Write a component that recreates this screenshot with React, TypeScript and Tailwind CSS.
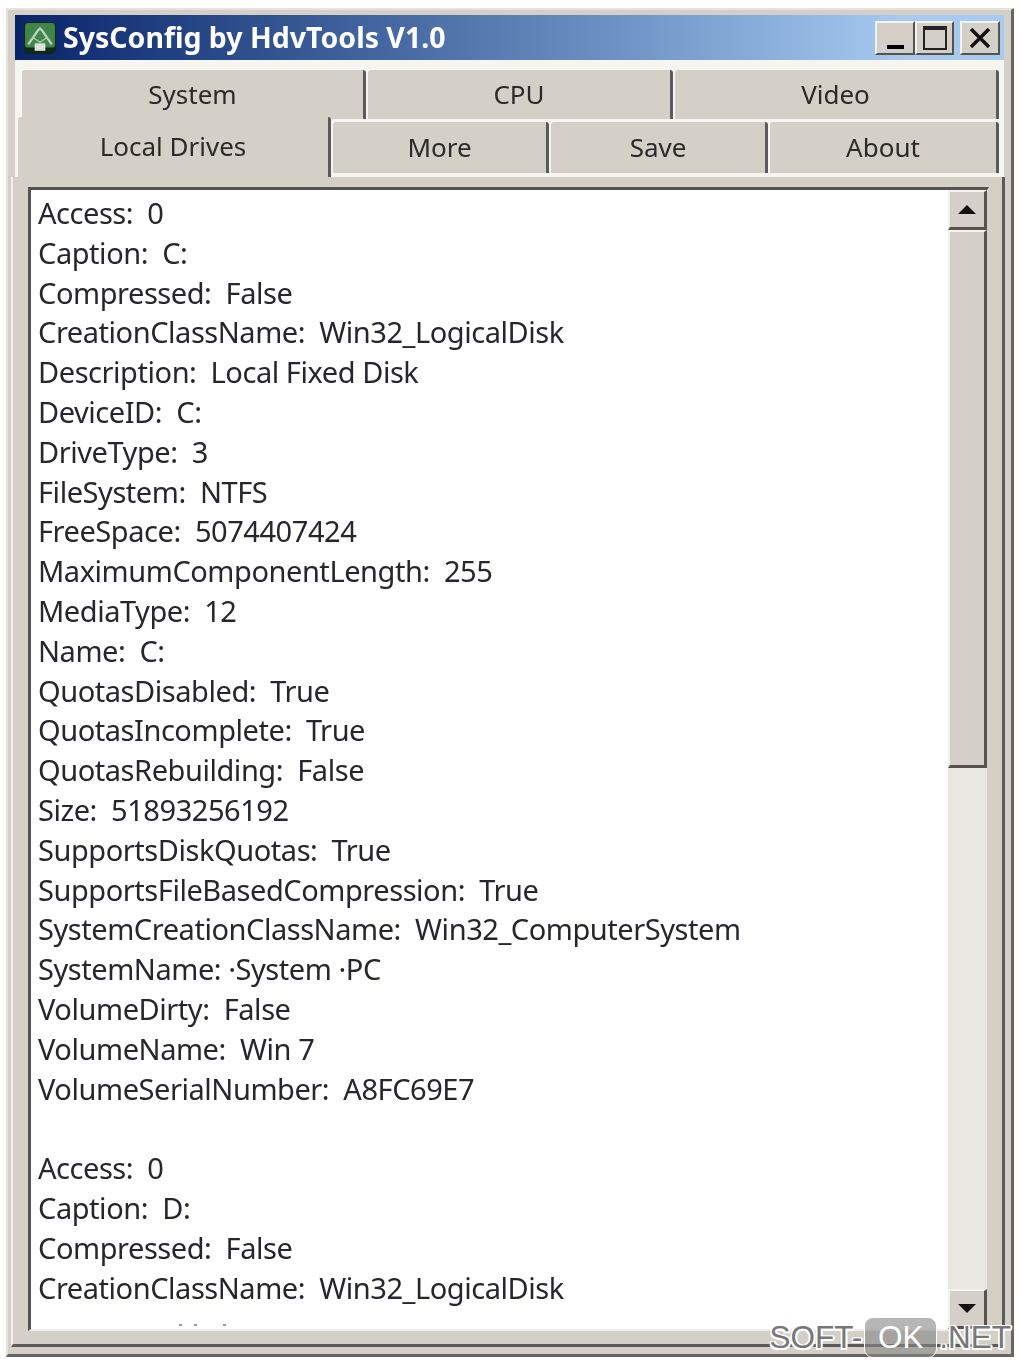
// App.tsx — SysConfig window, Local Drives tab.

const LINES = [
  'Access:  0',
  'Caption:  C:',
  'Compressed:  False',
  'CreationClassName:  Win32_LogicalDisk',
  'Description:  Local Fixed Disk',
  'DeviceID:  C:',
  'DriveType:  3',
  'FileSystem:  NTFS',
  'FreeSpace:  5074407424',
  'MaximumComponentLength:  255',
  'MediaType:  12',
  'Name:  C:',
  'QuotasDisabled:  True',
  'QuotasIncomplete:  True',
  'QuotasRebuilding:  False',
  'Size:  51893256192',
  'SupportsDiskQuotas:  True',
  'SupportsFileBasedCompression:  True',
  'SystemCreationClassName:  Win32_ComputerSystem',
  'SystemName: ·System ·PC',
  'VolumeDirty:  False',
  'VolumeName:  Win 7',
  'VolumeSerialNumber:  A8FC69E7',
  '',
  'Access:  0',
  'Caption:  D:',
  'Compressed:  False',
  'CreationClassName:  Win32_LogicalDisk',
];

function Tab({ label, width, height }: { label: string; width: string; height: string }) {
  return (
    <div className={`${width} ${height} flex shrink-0 items-center justify-center rounded-t-[3px] border-r-[3px] border-r-[#5a5a5a] bg-[#d4d0c8] text-[#2a2a2a]`}>
      {label}
    </div>
  );
}

function CaptionButton({ width, children }: { width: string; children: React.ReactNode }) {
  return (
    <div className={`${width} flex h-[34px] items-center justify-center border-t-2 border-l-2 border-r-2 border-b-2 border-t-[#f4f2ee] border-l-[#f4f2ee] border-r-[#55534e] border-b-[#55534e] bg-[#d4d0c8]`}>
      {children}
    </div>
  );
}

function ScrollButton({ up }: { up?: boolean }) {
  return (
    <div className="flex h-[40px] w-[39px] shrink-0 items-center justify-center border-t-2 border-l-2 border-r-[3px] border-b-[3px] border-t-[#f4f2ee] border-l-[#f4f2ee] border-r-[#55534e] border-b-[#55534e] bg-[#d4d0c8]">
      <svg width="20" height="11" viewBox="0 0 20 11">
        <path d={up ? 'M10 1 L19 10 L1 10 Z' : 'M1 1 L19 1 L10 10 Z'} fill="#111" />
      </svg>
    </div>
  );
}

export default function App() {
  return (
    <div className="relative h-[1362px] w-[1020px] overflow-hidden bg-white font-['Noto_Sans',sans-serif]">
      <div className="[filter:blur(0.7px)]">
        {/* window frame */}
        <div className="ml-[6px] mt-[8px] h-[1349px] w-[1008px] border-t-2 border-l-2 border-r-[3px] border-b-[3px] border-t-[#e6e3dd] border-l-[#e6e3dd] border-r-[#666] border-b-[#666] bg-[#d4d0c8] px-[7px] pt-[5px]">
          {/* title bar */}
          <div className="flex h-[45px] w-[989px] items-center bg-gradient-to-r from-[#0a246a] to-[#a6caf0] to-90% pl-[9px] pr-[4px]">
            <svg width="32" height="32" viewBox="0 0 30 30" className="shrink-0">
              <rect x="0" y="0" width="30" height="30" rx="4" fill="#0f2a16" />
              <rect x="1" y="1" width="28" height="23" rx="3" fill="#41854a" />
              <path d="M4 21 L13 8 L15 6 L17 8 L26 21" fill="none" stroke="#c4d4c4" strokeWidth="2" />
              <path d="M9 15 L15 19 L21 15" fill="none" stroke="#a8c8a8" strokeWidth="1.4" />
              <rect x="10" y="20" width="10" height="7" fill="#dfe2df" />
            </svg>
            <span className="ml-[7px] text-[28.5px] leading-none font-bold text-white">SysConfig by HdvTools V1.0</span>
            <div className="ml-auto flex">
              <CaptionButton width="w-[40px]">
                <div className="mt-[18px] h-[4px] w-[17px] bg-black" />
              </CaptionButton>
              <CaptionButton width="w-[39px]">
                <div className="h-[24px] w-[24px] border-2 border-t-[4px] border-[#222]" />
              </CaptionButton>
              <div className="w-[6px]" />
              <CaptionButton width="w-[40px]">
                <svg width="22" height="20" viewBox="0 0 22 20">
                  <path d="M2 1 L20 19 M20 1 L2 19" stroke="#111" strokeWidth="3.5" />
                </svg>
              </CaptionButton>
            </div>
          </div>

          {/* tabs */}
          <div className="w-[989px] bg-[#f6f5f2] pt-[10px] text-[26px]">
            <div className="ml-[7px] flex">
              <Tab label="System" width="w-[344px]" height="h-[49px]" />
              <div className="w-[2px]" />
              <Tab label="CPU" width="w-[305px]" height="h-[49px]" />
              <div className="w-[2px]" />
              <Tab label="Video" width="w-[324px]" height="h-[49px]" />
            </div>
            <div className="ml-[3px] mt-[3px] flex items-start">
              <div className="relative -mt-[5px] flex h-[60px] w-[313px] shrink-0 items-center justify-center rounded-t-[3px] border-r-[3px] border-r-[#5a5a5a] bg-[#d4d0c8] pb-[1px] text-[#2a2a2a]">
                Local Drives
              </div>
              <div className="w-[2px]" />
              <Tab label="More" width="w-[216px]" height="h-[51px]" />
              <div className="w-[2px]" />
              <Tab label="Save" width="w-[217px]" height="h-[51px]" />
              <div className="w-[2px]" />
              <Tab label="About" width="w-[229px]" height="h-[51px]" />
            </div>
          </div>

          {/* tab page */}
          <div className="-ml-[4px] h-[1170px] w-[994px] border-r-[3px] border-b-[3px] border-l-2 border-r-[#5a5a5a] border-b-[#5a5a5a] border-l-[#f2f0ec] pl-[15px] pr-[10px] pt-[10px]">
            {/* list box */}
            <div className="relative flex h-[1144px] w-[961px] border-t-[3px] border-l-[3px] border-r-2 border-b-2 border-t-[#55534e] border-l-[#55534e] border-r-[#d4d0c8] border-b-[#f0eeea] bg-white">
              <div className="min-w-0 flex-1 overflow-hidden pl-[7px] pt-[3px] text-[29px] leading-[39.8px] tracking-[-0.45px] whitespace-pre text-[#26262e]">
                {LINES.map((line, i) => (
                  <div key={i} className="h-[39.8px]">{line}</div>
                ))}
              </div>
              <span className="absolute bottom-[3px] left-[148px] h-[2px] w-[3px] bg-[#999]" />
              <span className="absolute bottom-[3px] left-[163px] h-[2px] w-[3px] bg-[#999]" />
              <span className="absolute bottom-[3px] left-[192px] h-[2px] w-[3px] bg-[#999]" />
              {/* scrollbar */}
              <div className="flex w-[39px] shrink-0 flex-col bg-[#e9e7e2]">
                <ScrollButton up />
                <div className="h-[538px] w-[39px] shrink-0 border-t-2 border-l-2 border-r-[3px] border-b-[3px] border-t-[#f4f2ee] border-l-[#f4f2ee] border-r-[#55534e] border-b-[#55534e] bg-[#d4d0c8]" />
                <div className="flex-1" />
                <ScrollButton />
              </div>
            </div>
          </div>
        </div>
      </div>

      {/* watermark */}
      <div className="absolute bottom-[4px] right-[9px] flex items-center font-['Liberation_Sans',sans-serif] text-[31.5px] leading-none">
        <span className="text-[#77777a] [text-shadow:-1.5px_-1.5px_0_#fff,1.5px_-1.5px_0_#fff,-1.5px_1.5px_0_#fff,1.5px_1.5px_0_#fff,0_2px_0_#fff,2px_0_0_#fff]">SOFT-</span>
        <span className="mx-[2px] flex h-[41px] w-[73px] items-center justify-center rounded-[9px] border border-white bg-[#85858599] text-white">OK</span>
        <span className="text-[#77777a] [text-shadow:-1.5px_-1.5px_0_#fff,1.5px_-1.5px_0_#fff,-1.5px_1.5px_0_#fff,1.5px_1.5px_0_#fff,0_2px_0_#fff,2px_0_0_#fff]">.NET</span>
      </div>
    </div>
  );
}
